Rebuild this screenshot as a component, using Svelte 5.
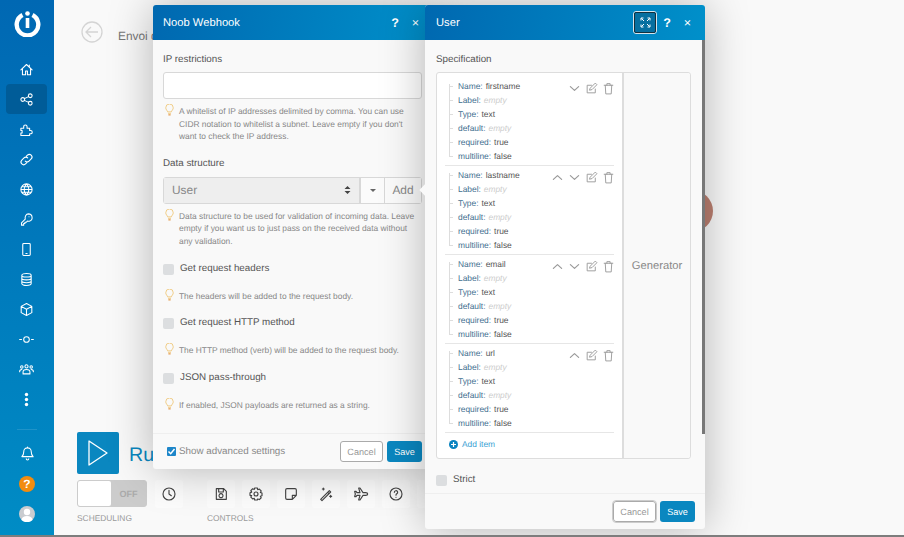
<script>
  const circle = (cx, cy, r) => `M${cx - r} ${cy}a${r} ${r} 0 1 0 ${r * 2} 0a${r} ${r} 0 1 0 ${-r * 2} 0`

  const NAV = [
    { d: 'M3 12.5 12 4l9 8.5M5.5 10.5V20.5h5v-6h3v6h5v-10M16.5 5v3' },
    { d: `${circle(6, 12, 3)}${circle(18, 6, 3)}${circle(18, 18, 3)}M8.7 10.6l6.6-3.2M8.7 13.4l6.6 3.2`, active: true },
    { d: 'M3 10h4.500V7.500a2.700 2.700 0 0 1 5.400 0V10H17v3.500h1.500a2.700 2.700 0 0 1 0 5.400H17v2.600H3v-4h2v-4H3z' },
    { d: 'M10 14.500a4.200 4.200 0 0 0 6 0l3.500-3.500a4.200 4.200 0 0 0-6-6L11.500 7M14 9.500a4.200 4.200 0 0 0-6 0L4.500 13a4.200 4.200 0 0 0 6 6l2-2' },
    { d: `${circle(12, 12, 9)}M3 12h18M4.500 7.500h15M4.500 16.500h15M12 3c-5 5-5 13 0 18M12 3c5 5 5 13 0 18` },
    { d: 'M15 3a6 6 0 0 1 1.500 11.800c-1.500.4-3-.3-3-.3l-2 2H9.500v2h-2v2.500H4v-3.500l6-6c-1-4 1.500-8.500 5-8.500zM16 7.500h.01' },
    { d: 'M7.500 2.500h9a1.500 1.500 0 0 1 1.500 1.500v16a1.500 1.500 0 0 1-1.500 1.500h-9A1.500 1.500 0 0 1 6 20V4a1.500 1.500 0 0 1 1.500-1.500zM11 18.500h2' },
    { d: 'M4.500 5.500c0-4 15-4 15 0v13c0 4-15 4-15 0zM4.500 5.500c0 3.500 15 3.500 15 0M4.500 10c0 3.500 15 3.500 15 0M4.500 14.500c0 3.500 15 3.500 15 0' },
    { d: 'M12 2.500 20.500 7v10L12 21.500 3.500 17V7zM3.500 7l8.500 4.500L20.500 7M12 11.500v10' },
    { d: `${circle(12, 12, 4.5)}M1 12h3M20 12h3` },
    { d: `${circle(12, 7, 2.5)}${circle(4.500, 8, 2)}${circle(19.500, 8, 2)}M6.500 19v-3c0-2.500 2-4 5.500-4s5.500 1.500 5.500 4v3zM1 15.500c0-2.500 1-3.500 3.500-3.500M23 15.500c0-2.500-1-3.500-3.500-3.500` },
  ]

  const TOOLS = [
    { d: 'M5 4h11l4 4v12H5zM8.500 4v5h7V4M12 11.500a3 3 0 1 0 .01 0z' },
    { d: `${circle(12, 12, 3)}M10 3h4l.6 2.600 2.400-1 2.800 2.800-1.300 2.300 2.500.8v4l-2.500.8 1.300 2.300-2.800 2.800-2.400-1L14 21h-4l-.6-2.600-2.400 1-2.800-2.800 1.300-2.300L3 14v-4l2.500-.8-1.300-2.300L7 4.100l2.400 1z` },
    { d: 'M6 4h12a2 2 0 0 1 2 2v8l-6 6H6a2 2 0 0 1-2-2V6a2 2 0 0 1 2-2zM14 20v-6h6' },
    { d: 'M4 20 17 7l2 2L6 22zM14.500 9.500l2 2M8 3v3M6.500 4.500h3M19 14v3M17.500 15.500h3' },
    { d: 'M22 12c0-1-1-2-3-2h-4L10.500 3H8.500l2 7H6L4.500 8H2.500l1 4-1 4h2L6 14h4.500l-2 7h2L15 14h4c2 0 3-1 3-2z' },
    { d: `${circle(12, 12, 9)}M9.500 9.500a2.500 2.500 0 1 1 3.500 2.300c-.8.4-1 1-1 2M12 17h.01` },
  ]

  const FIELDS = [
    { name: 'firstname', up: false, down: true },
    { name: 'lastname', up: true, down: true },
    { name: 'email', up: true, down: true },
    { name: 'url', up: true, down: false },
  ]

  const CHECKS = [
    { label: 'Get request headers', hint: 'The headers will be added to the request body.' },
    { label: 'Get request HTTP method', hint: 'The HTTP method (verb) will be added to the request body.' },
    { label: 'JSON pass-through', hint: 'If enabled, JSON payloads are returned as a string.' },
  ]

  const rowsFor = (name) => [
    { key: 'Name', value: name },
    { key: 'Label', value: null },
    { key: 'Type', value: 'text' },
    { key: 'default', value: null },
    { key: 'required', value: 'true' },
    { key: 'multiline', value: 'false' },
  ]
</script>

{#snippet bulb()}
  <svg class="bulb" viewBox="0 0 12 16" fill="none">
    <path d="M3.500 10.500C3 8.500 1 7.500 1 5a5 5 0 0 1 10 0c0 2.500-2 3.500-2.500 5.500z" stroke="#f0cc85" stroke-width="1.300" />
    <path d="M4 12.500h4" stroke="#f0cc85" stroke-width="1.200" />
    <path d="M4.500 14.500h3" stroke="#e0892b" stroke-width="1.400" />
  </svg>
{/snippet}

{#snippet glyph(d, size = 12, color = '#999', width = 1.8)}
  <svg width={size} height={size} viewBox="0 0 24 24" fill="none" stroke={color} stroke-width={width} stroke-linejoin="round" stroke-linecap="round"><path {d} /></svg>
{/snippet}

<div class="page">
  <nav class="sidebar">
    <div class="logo">
      <svg width="27" height="27" viewBox="0 0 27 27" fill="none">
        <path d="M8.500 5a10.800 10.800 0 1 0 10 0" stroke="#fff" stroke-width="4.400" />
        <rect x="11.700" y="8" width="3.600" height="10" fill="#fff" />
        <circle cx="13.500" cy="3.500" r="2.300" fill="#fff" />
      </svg>
    </div>
    <div class="nav">
      {#each NAV as item}
        <div class="nav-item" class:active={item.active}>
          {@render glyph(item.d, 15, '#fff', 1.700)}
        </div>
      {/each}
      <div class="nav-item">
        <svg width="15" height="15" viewBox="0 0 15 15" fill="#fff">
          <circle cx="7.500" cy="2.500" r="1.700" /><circle cx="7.500" cy="7.500" r="1.700" /><circle cx="7.500" cy="12.500" r="1.700" />
        </svg>
      </div>
    </div>
    <div class="nav-bottom">
      <div class="nav-item">
        {@render glyph('M12 3a6 6 0 0 0-6 6c0 5-2 7-3 8h18c-1-1-3-3-3-8a6 6 0 0 0-6-6zM10 20.500a2 2 0 0 0 4 0M12 1.500V3', 15, '#fff', 1.700)}
      </div>
      <div class="nav-item"><span class="help-dot">?</span></div>
      <div class="nav-item">
        <svg class="avatar" width="16" height="16" viewBox="0 0 16 16">
          <circle cx="8" cy="8" r="8" fill="#c9ccd0" />
          <circle cx="8" cy="6" r="3.200" fill="#fff" />
          <path d="M2.500 14c.5-3 2.500-4 5.500-4s5 1 5.500 4a8 8 0 0 1-11 0z" fill="#fff" />
        </svg>
      </div>
    </div>
  </nav>

  <main class="main">
    <div class="topbar">
      <svg width="22" height="22" viewBox="0 0 22 22" fill="none" stroke="#d4d4d4" stroke-width="1.300">
        <circle cx="11" cy="11" r="10" />
        <path d="M17 11H5M10 6l-5 5 5 5" />
      </svg>
      <span class="scenario">Envoi d</span>
    </div>
    <div class="spacer"></div>
    <div class="run-row">
      <div class="run-btn">
        <svg width="22" height="28" viewBox="0 0 22 28" fill="none" stroke="#fff" stroke-width="1.300" stroke-linejoin="round">
          <path d="M2 2v24l18-12z" />
        </svg>
      </div>
      <span class="run-label">Run</span>
    </div>
    <div class="controls">
      <div class="group sched">
        <div class="group-row">
          <div class="toggle"><span class="knob"></span><span class="off">OFF</span></div>
          <div class="tool">{@render glyph(`${circle(12, 12, 9)}M12 6.500V12l3.500 2.500`, 16, '#444', 1.700)}</div>
        </div>
        <span class="caption">SCHEDULING</span>
      </div>
      <div class="group">
        <div class="group-row">
          {#each TOOLS as tool}
            <div class="tool">{@render glyph(tool.d, 16, '#444', 1.700)}</div>
          {/each}
          <div class="tool"></div>
        </div>
        <span class="caption">CONTROLS</span>
      </div>
    </div>
  </main>

  <span class="module-dot"></span>

  <section class="modal webhook">
    <header class="modal-head">
      <span class="title">Noob Webhook</span>
      <span class="head-help">?</span>
      <span class="head-close">×</span>
    </header>
    <div class="modal-body">
      <div class="label first">IP restrictions</div>
      <div class="input"></div>
      <div class="hint">
        {@render bulb()}
        <p>A whitelist of IP addresses delimited by comma. You can use CIDR notation to whitelist a subnet. Leave empty if you don't want to check the IP address.</p>
      </div>

      <div class="label ds">Data structure</div>
      <div class="select-group">
        <div class="select">
          <span>User</span>
          <svg width="7" height="10" viewBox="0 0 7 10" fill="#444"><path d="M3.500 1 6.500 4h-6zM3.500 9l-3-3h6z" /></svg>
        </div>
        <div class="caret"><span></span></div>
        <div class="add">Add</div>
      </div>
      <div class="hint">
        {@render bulb()}
        <p>Data structure to be used for validation of incoming data. Leave empty if you want us to just pass on the received data without any validation.</p>
      </div>

      {#each CHECKS as check}
        <div class="check-row">
          <span class="box"></span>
          <span class="check-label">{check.label}</span>
        </div>
        <div class="hint tight">
          {@render bulb()}
          <p>{check.hint}</p>
        </div>
      {/each}
    </div>
    <footer class="modal-foot">
      <span class="blue-check">
        <svg width="9" height="9" viewBox="0 0 9 9" fill="none" stroke="#fff" stroke-width="1.500"><path d="M1.500 4.500 3.700 6.700 7.500 2" /></svg>
      </span>
      <span class="advanced">Show advanced settings</span>
      <button class="btn cancel">Cancel</button>
      <button class="btn save">Save</button>
    </footer>
  </section>

  <section class="modal spec">
    <span class="notch"></span>
    <header class="modal-head">
      <span class="title">User</span>
      <span class="expand">
        <svg width="11" height="11" viewBox="0 0 11 11" fill="none" stroke="#fff" stroke-width="1">
          <path d="M1 3.500V1h2.500M7.500 1H10v2.500M10 7.500V10H7.500M3.500 10H1V7.500M1.500 1.500l2.500 2.500M9.500 1.500 7 4M9.500 9.500 7 7M1.500 9.500 4 7" />
        </svg>
      </span>
      <span class="head-help">?</span>
      <span class="head-close">×</span>
    </header>
    <div class="modal-body">
      <div class="label first">Specification</div>
      <div class="spec-box">
        <div class="items">
          {#each FIELDS as field}
            <div class="item">
              <div class="tree">
                {#each rowsFor(field.name) as row}
                  <div class="tree-row">
                    <span class="key">{row.key}:</span>
                    {#if row.value}
                      <span class="val">{row.value}</span>
                    {:else}
                      <span class="empty">empty</span>
                    {/if}
                  </div>
                {/each}
              </div>
              <div class="actions">
                {#if field.up}<span class="act">{@render glyph('M3 16l9-8 9 8', 11, '#999', 2.600)}</span>{/if}
                {#if field.down}<span class="act">{@render glyph('M3 8l9 8 9-8', 11, '#999', 2.600)}</span>{/if}
                <span class="act">{@render glyph('M19 13v7H4V6h8M10 11 19 2l3 3-9 9-4 1z', 13, '#999', 1.700)}</span>
                <span class="act">{@render glyph('M4 6h16M9 6V3h6v3M6 6l1 16h10l1-16', 13, '#999', 1.700)}</span>
              </div>
            </div>
          {/each}
          <div class="add-item">
            <svg width="9" height="9" viewBox="0 0 9 9"><circle cx="4.500" cy="4.500" r="4.500" fill="#0a83c0" /><path d="M4.500 2v5M2 4.500h5" stroke="#fff" stroke-width="1.200" /></svg>
            <span>Add item</span>
          </div>
        </div>
        <div class="generator">Generator</div>
      </div>
      <div class="check-row strict">
        <span class="box"></span>
        <span class="check-label">Strict</span>
      </div>
    </div>
    <footer class="modal-foot end">
      <button class="btn cancel focus">Cancel</button>
      <button class="btn save">Save</button>
    </footer>
    <span class="scrollbar"></span>
  </section>
</div>

<style>
  :global(body) {
    margin: 0;
    background: #f9f9f9;
    font-family: "Liberation Sans", Arial, sans-serif;
    text-rendering: geometricPrecision;
  }
  .page {
    position: relative;
    display: flex;
    width: 904px;
    height: 537px;
    overflow: hidden;
    box-sizing: border-box;
    border-bottom: 2px solid #7d7d7d;
    background: #f9f9f9;
  }

  .sidebar {
    width: 54px;
    flex: none;
    display: flex;
    flex-direction: column;
    align-items: center;
    background: linear-gradient(180deg, #0068b3 0%, #008cc5 100%);
  }
  .logo { height: 54px; display: flex; align-items: center; justify-content: center; margin-top: -4px; margin-bottom: 4px; }
  .nav { display: flex; flex-direction: column; width: 100%; box-sizing: border-box; padding-left: 6px; }
  .nav-item {
    width: 41px;
    height: 30px;
    display: flex;
    align-items: center;
    justify-content: center;
    border-radius: 4px;
  }
  .nav-item.active { background: #005c98; }
  .nav-bottom {
    margin-top: 15px;
    padding-top: 8px;
    border-top: 1px solid rgba(255, 255, 255, 0.12);
    width: 20px;
    display: flex;
    flex-direction: column;
    align-items: center;
  }
  .nav-bottom .nav-item { flex: none; height: 30.500px; }
  .help-dot {
    width: 16px;
    height: 16px;
    border-radius: 50%;
    background: #f28c0f;
    color: #fff;
    font-size: 12px;
    font-weight: 700;
    line-height: 16px;
    text-align: center;
  }

  .main {
    flex: 1;
    display: flex;
    flex-direction: column;
    padding: 21px 0 12px 23px;
    color: #777;
  }
  .topbar { display: flex; align-items: center; gap: 15px; padding-left: 4px; }
  .scenario { font-size: 11.900px; color: #777; white-space: nowrap; margin-top: 7px; }
  .spacer { flex: 1; }
  .run-row { display: flex; align-items: center; gap: 10px; }
  .run-btn {
    width: 42px;
    height: 42px;
    background: #0a87c0;
    border-radius: 2px;
    display: flex;
    align-items: center;
    justify-content: center;
  }
  .run-label { font-size: 19.600px; color: #0a87c0; white-space: nowrap; margin-top: 4px; }
  .controls { display: flex; margin-top: 6px; gap: 24px; }
  .group { display: flex; flex-direction: column; gap: 5px; }
  .group-row { display: flex; gap: 7px; }
  .sched .group-row { gap: 8px; }
  .caption { font-size: 8.400px; color: #999; }
  .toggle {
    width: 70px;
    height: 27px;
    box-sizing: border-box;
    background: #ccc;
    border: 1px solid #ccc;
    border-radius: 3px;
    display: flex;
    align-items: center;
  }
  .knob { width: 33px; height: 25px; background: #fff; border-radius: 2px; }
  .off { flex: 1; text-align: center; color: #aaa; font-size: 9.100px; font-weight: 700; }
  .tool {
    width: 28px;
    height: 28px;
    background: #fcfcfc;
    border-radius: 3px;
    display: flex;
    align-items: center;
    justify-content: center;
  }

  .module-dot {
    position: absolute;
    left: 671px;
    top: 190px;
    width: 42px;
    height: 42px;
    border-radius: 50%;
    background: #bb7f70;
  }

  .modal {
    position: absolute;
    top: 5px;
    width: 280px;
    display: flex;
    flex-direction: column;
    background: #f9f9f9;
    border-radius: 3px;
    box-shadow: 0 0 45px rgba(0, 0, 0, 0.28);
  }
  .webhook { left: 153px; height: 464px; }
  .spec { left: 425px; height: 524px; }
  .modal-head {
    height: 35px;
    flex: none;
    display: flex;
    align-items: center;
    box-sizing: border-box;
    padding: 0 11px 0 10px;
    color: #fff;
    border-radius: 3px 3px 0 0;
    background: linear-gradient(100deg, #0068b0 0%, #0090ca 100%);
  }
  .title { font-size: 11.200px; flex: 1; }
  .head-help { font-size: 12.600px; font-weight: 700; width: 20px; text-align: center; margin-right: 4px; }
  .head-close { font-size: 12.600px; width: 13px; text-align: center; }
  .spec .modal-head { padding-left: 11px; }
  .expand {
    width: 24px;
    height: 23px;
    box-sizing: border-box;
    border: 1px solid #d6e4ec;
    outline: 1px solid #12303f;
    outline-offset: -2px;
    border-radius: 3px;
    background: #066fa0;
    display: flex;
    align-items: center;
    justify-content: center;
  }

  .modal-body { flex: 1; padding: 0 11px 0 10px; }
  .spec .modal-body { padding-left: 11px; padding-right: 14px; }
  .label { font-size: 9.800px; color: #555; line-height: 14px; }
  .label.first { margin-top: 13px; margin-bottom: 5px; }
  .label.ds { margin-top: 14px; margin-bottom: 6px; }
  .input {
    height: 27px;
    box-sizing: border-box;
    background: #fff;
    border: 1px solid #d8d8d8;
    border-radius: 3px;
  }
  .hint { display: flex; gap: 5px; margin-top: 6px; padding-left: 2px; }
  .hint p { margin: 0; font-size: 8.400px; line-height: 12.600px; color: #888; }
  .bulb { width: 9px; height: 12px; flex: none; margin-top: -1px; }
  .hint.tight { margin-top: 14px; }
  .select-group {
    display: flex;
    height: 27px;
    box-sizing: border-box;
    border: 1px solid #d8d8d8;
    border-radius: 3px;
    background: #fff;
  }
  .select {
    flex: 1;
    background: #eee;
    display: flex;
    align-items: center;
    justify-content: space-between;
    padding: 0 8px 0 8px;
    font-size: 11.900px;
    color: #888;
    border-right: 2px solid #d8d8d8;
  }
  .caret {
    width: 23px;
    display: flex;
    align-items: center;
    justify-content: center;
    border-right: 1px solid #d8d8d8;
    background: #fbfbfb;
  }
  .caret span { border: 3.500px solid transparent; border-top-color: #666; border-bottom-width: 0; }
  .add { width: 36px; text-align: center; font-size: 11.900px; line-height: 25px; color: #888; background: #fbfbfb; }
  .check-row { display: flex; align-items: flex-start; gap: 6px; margin-top: 14px; height: 14px; }
  .box { width: 11px; height: 11px; background: #dcdee0; border-radius: 2px; flex: none; margin-top: 2px; }
  .check-label { font-size: 9.800px; color: #555; line-height: 13px; }
  .strict { margin-top: 14px; }

  .modal-foot {
    flex: none;
    height: 35px;
    display: flex;
    align-items: center;
    gap: 4px;
    border-top: 1px solid #efefef;
    padding: 0 11px 0 14px;
  }
  .modal-foot.end { justify-content: flex-end; padding-right: 10px; }
  .blue-check {
    width: 9px;
    height: 9px;
    background: #1d86c9;
    border-radius: 1px;
    display: flex;
    margin-right: -1px;
  }
  .advanced { font-size: 9.800px; color: #888; flex: 1; }
  .btn {
    height: 21px;
    box-sizing: border-box;
    border-radius: 3px;
    font: 9.100px "Liberation Sans", Arial, sans-serif;
    text-rendering: geometricPrecision;
    padding: 0;
  }
  .cancel { width: 43px; background: #fff; border: 1px solid #aaa; color: #999; }
  .cancel.focus { outline: 1px solid #ccc; }
  .save { width: 35px; background: #0a87c0; border: 0; color: #fff; }

  .spec-box {
    display: flex;
    height: 387px;
    box-sizing: border-box;
    border: 1px solid #ddd;
    border-radius: 3px;
    background: #fff;
  }
  .items { width: 187px; box-sizing: border-box; padding: 4px 8px 0 8px; border-right: 2px solid #ddd; }
  .item {
    display: flex;
    height: 89px;
    box-sizing: border-box;
    padding: 1px 0 0 4px;
    border-bottom: 1px solid #e6e6e6;
  }
  .tree { position: relative; flex: 1; padding-top: 1px; }
  .tree::before {
    content: '';
    position: absolute;
    left: 0;
    top: 6px;
    bottom: 8px;
    border-left: 1px solid #ddd;
  }
  .tree-row { position: relative; display: flex; gap: 3px; height: 14px; line-height: 14px; padding-left: 9px; font-size: 8.400px; white-space: nowrap; }
  .tree-row::before {
    content: '';
    position: absolute;
    left: 0;
    top: 7px;
    width: 4px;
    border-top: 1px solid #ddd;
  }
  .key { color: #3f6f8f; }
  .val { color: #555; }
  .empty { color: #ccc; font-style: italic; }
  .actions { display: flex; align-items: flex-start; margin-right: -3px; padding-top: 3px; }
  .act { width: 17px; height: 14px; display: flex; justify-content: center; align-items: center; }
  .add-item { display: flex; align-items: center; gap: 4px; font-size: 8.400px; color: #3a9fd3; padding: 6px 0 0 4px; }
  .generator {
    flex: 1;
    display: flex;
    align-items: center;
    justify-content: center;
    font-size: 11.200px;
    color: #888;
    background: #f9f9f9;
    border-radius: 0 3px 3px 0;
  }

  .notch {
    position: absolute;
    left: -4px;
    top: 181px;
    width: 8px;
    height: 8px;
    background: #f9f9f9;
    transform: rotate(45deg);
  }
  .scrollbar {
    position: absolute;
    right: 0;
    top: 35px;
    width: 3px;
    height: 394px;
    background: #777;
  }
</style>
